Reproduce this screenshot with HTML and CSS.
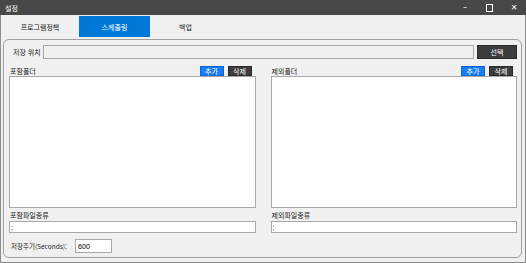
FILE: index.html
```html
<!DOCTYPE html>
<html lang="ko">
<head>
  <meta charset="UTF-8">
  <title>설정</title>
  <link rel="stylesheet" href="styles.css">
</head>
<body>
  <div class="window">
    <div class="titlebar">
      <span class="title">설정</span>
      <div class="controls">
        <span class="ctl">&#8211;</span>
        <span class="ctl box"></span>
        <span class="ctl">&#10005;</span>
      </div>
    </div>

    <div class="tabs">
      <div class="tab">프로그램정책</div>
      <div class="tab active">스케줄링</div>
      <div class="tab">백업</div>
    </div>

    <div class="panel">
      <div class="row path-row">
        <label class="path-label">저장 위치</label>
        <input type="text" class="path-input">
        <button class="btn dark select-btn">선택</button>
      </div>

      <div class="folders">
        <div class="column">
          <div class="col-head">
            <span>포함폴더</span>
            <div class="mini-btns">
              <button class="btn blue small">추가</button>
              <button class="btn dark small">삭제</button>
            </div>
          </div>
          <div class="list"></div>
          <div class="type-label">포함파일종류</div>
          <input type="text" class="type-input" value=";">
        </div>

        <div class="column">
          <div class="col-head">
            <span>제외폴더</span>
            <div class="mini-btns">
              <button class="btn blue small">추가</button>
              <button class="btn dark small">삭제</button>
            </div>
          </div>
          <div class="list"></div>
          <div class="type-label">제외파일종류</div>
          <input type="text" class="type-input" value=";">
        </div>
      </div>

      <div class="row period-row">
        <label>저장주기(Seconds):</label>
        <input type="text" class="period-input" value="600">
      </div>
    </div>
  </div>
</body>
</html>
```

FILE: styles.css
```css
body {
  margin: 0;
  font-family: "Noto Sans CJK KR", "Noto Sans", sans-serif;
  font-size: 7px;
  color: #222;
}

.window {
  width: 526px;
  height: 263px;
  box-sizing: border-box;
  background-color: #f0f0f0;
  border: 1px solid #8c8c8c;
  border-top: none;
  display: flex;
  flex-direction: column;
}

.titlebar {
  height: 15px;
  background-color: #474747;
  color: #fff;
  display: flex;
  align-items: center;
  justify-content: space-between;
  padding-left: 5px;
  margin: 0 -1px;
}

.title {
  font-size: 7px;
}

.controls {
  display: flex;
  height: 15px;
  align-items: center;
}

.ctl {
  width: 24px;
  text-align: center;
  font-family: "DejaVu Sans", sans-serif;
  font-size: 8px;
  color: #fff;
}

.ctl.box {
  width: 5px;
  height: 6px;
  border: 1px solid #fff;
  margin: 0 9px;
}

.tabs {
  display: flex;
  height: 21px;
  margin-top: 1px;
  background-color: #f0f0f0;
}

.tab {
  width: 71px;
  display: flex;
  align-items: center;
  justify-content: center;
  font-size: 7px;
  color: #222;
}

.tab:first-child {
  width: 78px;
}

.tab.active {
  background-color: #0078d7;
  color: #fff;
}

.panel {
  flex: 1;
  margin: 2px 3px 4px 2px;
  border: 1px solid #a0a0a0;
  border-radius: 6px;
  padding: 5px 4px 3px 5px;
  display: flex;
  flex-direction: column;
}

.row {
  display: flex;
  align-items: center;
}

.path-row {
  height: 14px;
}

.path-label {
  width: 34px;
  padding-left: 4px;
  box-sizing: border-box;
  white-space: nowrap;
}

.path-input {
  flex: 1;
  height: 14px;
  box-sizing: border-box;
  border: 1px solid #a8a8a8;
  background-color: #f0f0f0;
  margin: 0;
}

.btn {
  font-family: "Noto Sans CJK KR", sans-serif;
  font-size: 7px;
  color: #fff;
  border: none;
  padding: 0;
  margin: 0;
}

.btn.dark {
  background-color: #3c3c3c;
  border: 1px solid #2a2a2a;
}

.btn.blue {
  background-color: #1a7ef2;
  border: 1px solid #0a66d6;
}

.select-btn {
  width: 40px;
  height: 14px;
  margin-left: 3px;
}

.folders {
  display: flex;
  gap: 15px;
  margin-top: 6px;
}

.column {
  width: 247px;
  display: flex;
  flex-direction: column;
}

.col-head {
  height: 11px;
  display: flex;
  align-items: center;
  justify-content: space-between;
  padding-left: 1px;
}

.mini-btns {
  display: flex;
  gap: 4px;
  padding-right: 4px;
}

.btn.small {
  width: 24px;
  height: 10px;
  line-height: 8px;
}

.list {
  height: 132px;
  box-sizing: border-box;
  border: 1px solid #a8a8a8;
  background-color: #fff;
}

.type-label {
  height: 13px;
  display: flex;
  align-items: center;
  padding-left: 1px;
}

.type-input {
  height: 12px;
  box-sizing: border-box;
  border: 1px solid #a8a8a8;
  margin: 0;
  padding: 0 1px;
  font-size: 7px;
}

.period-row {
  margin-top: 6px;
  height: 14px;
  padding-left: 2px;
}

.period-row label {
  width: 64px;
  white-space: nowrap;
  font-size: 6.5px;
}

.period-input {
  width: 37px;
  height: 14px;
  box-sizing: border-box;
  border: 1px solid #a8a8a8;
  margin: 0;
  padding: 0 2px;
  font-size: 7px;
  font-family: "Noto Sans", sans-serif;
}
```
